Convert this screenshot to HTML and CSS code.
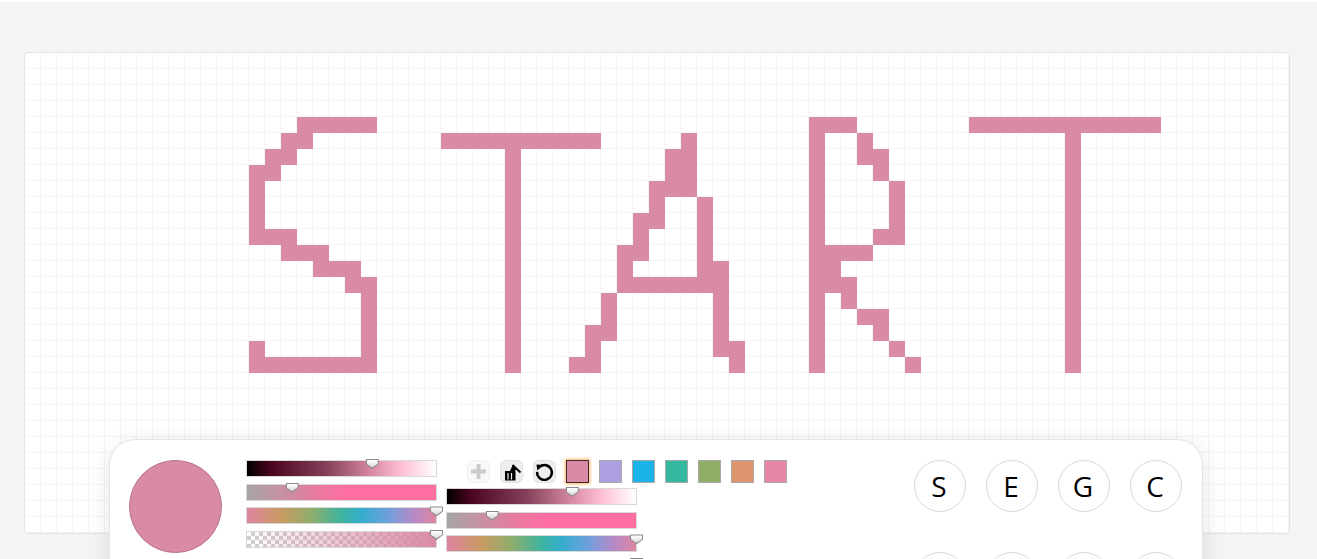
FILE: index.html
```html
<!DOCTYPE html>
<html lang="en">
<head>
  <meta charset="UTF-8" />
  <meta name="viewport" content="width=device-width, initial-scale=1.0"/>
  <title>Pixel editor</title>
  <link rel="stylesheet" href="styles.css">
</head>
<body>
  <div class="page">
    <div class="canvas" id="canvas"></div>

    <div class="panel">
      <div class="preview"></div>

      <div class="sliders">
        <div class="slider lightness"><span class="thumb" style="left: 66%"></span></div>
        <div class="slider saturation"><span class="thumb" style="left: 23.6%"></span></div>
        <div class="slider hue"><span class="thumb" style="left: 100%"></span></div>
        <div class="slider alpha"><span class="thumb" style="left: 100%"></span></div>
      </div>

      <div class="middle">
        <div class="toolbar">
          <button type="button" class="tool disabled">
            <svg viewBox="0 0 23 23" width="23" height="23"><path d="M11.5 4v15M4 11.5h15" stroke="#ccc" stroke-width="4" fill="none"/></svg>
          </button>
          <button type="button" class="tool">
            <svg viewBox="0 0 23 23" width="23" height="23">
              <path d="M5 11h10.5v9.5H5z" fill="#000"/>
              <path d="M8 13v6.5M11.5 13v6.5" stroke="#eee" stroke-width="1.2"/>
              <path d="M10 11l2.5-5.5 4 3.5-2 2.5z" fill="#000"/>
              <path d="M12.5 5l8 7.5" stroke="#000" stroke-width="2"/>
            </svg>
          </button>
          <button type="button" class="tool">
            <svg viewBox="0 0 23 23" width="23" height="23">
              <path d="M6.6 6.9a7.4 7.4 0 1 1-2.5 5" stroke="#000" stroke-width="2.4" fill="none"/>
              <path d="M3.5 4.5l7 .5-6.2 5.6z" fill="#000"/>
            </svg>
          </button>
          <button type="button" class="swatch active c1"></button>
          <button type="button" class="swatch c2"></button>
          <button type="button" class="swatch c3"></button>
          <button type="button" class="swatch c4"></button>
          <button type="button" class="swatch c5"></button>
          <button type="button" class="swatch c6"></button>
          <button type="button" class="swatch c7"></button>
        </div>
        <div class="sliders">
          <div class="slider lightness"><span class="thumb" style="left: 66%"></span></div>
          <div class="slider saturation"><span class="thumb" style="left: 23.6%"></span></div>
          <div class="slider hue"><span class="thumb" style="left: 100%"></span></div>
          <div class="slider alpha"><span class="thumb" style="left: 100%"></span></div>
        </div>
      </div>

      <div class="keys">
        <button type="button" class="key">S</button>
        <button type="button" class="key">E</button>
        <button type="button" class="key">G</button>
        <button type="button" class="key">C</button>
        <button type="button" class="key"></button>
        <button type="button" class="key"></button>
        <button type="button" class="key"></button>
        <button type="button" class="key"></button>
      </div>
    </div>
  </div>

  <script>
    const cols = 79;
    const rows = 30;

    // painted cells by row, "from-to" or a single column
    const painted = {
      4: "17-21 49-51 59-70",
      5: "16-17 26-35 41 49 52 65",
      6: "15-16 30 40-41 49 52-53 65",
      7: "14-15 30 40-41 49 53 65",
      8: "14 30 39-41 49 54 65",
      9: "14 30 39 42 49 54 65",
      10: "14 30 38-39 42 49 54 65",
      11: "14-16 30 38 42 49 53-54 65",
      12: "16-18 30 37-38 42 49-52 65",
      13: "18-20 30 37 42-43 49-50 65",
      14: "20-21 30 37-43 49-51 65",
      15: "21 30 36 43 49 51 65",
      16: "21 30 36 43 49 52-53 65",
      17: "21 30 35-36 43 49 53 65",
      18: "14 21 30 35 43-44 49 54 65",
      19: "14-21 30 34-35 44 49 55 65"
    };

    function isPainted(row, col) {
      if (!painted[row]) return false;
      return painted[row].split(" ").some(function (part) {
        const ends = part.split("-").map(Number);
        const last = ends.length > 1 ? ends[1] : ends[0];
        return col >= ends[0] && col <= last;
      });
    }

    const canvas = document.getElementById("canvas");
    for (let r = 0; r < rows; r++) {
      for (let c = 0; c < cols; c++) {
        const cell = document.createElement("div");
        cell.className = isPainted(r, c) ? "cell on" : "cell";
        canvas.appendChild(cell);
      }
    }
  </script>
</body>
</html>
```

FILE: styles.css
```css
html, body {
  margin: 0;
  height: 100%;
  overflow: hidden;
  background: #fff;
  font-family: 'Open Sans', sans-serif;
}

.page {
  position: relative;
  margin-top: 2px;
  height: 557px;
  box-sizing: border-box;
  padding: 50px 0 0 24px;
  background: #f4f4f4;
  overflow: hidden;
}

.canvas {
  display: grid;
  grid-template-columns: repeat(79, 16px);
  grid-auto-rows: 16px;
  width: 1264px;
  background: #fff;
  border: 1px solid #e4e4e4;
  border-radius: 4px;
  overflow: hidden;
}

.cell {
  box-sizing: border-box;
  border-right: 1px solid #f4f4f4;
  border-bottom: 1px solid #f4f4f4;
}

.cell.on {
  background: #d98aa5;
  border-color: #d98aa5;
}

.panel {
  position: absolute;
  left: 109px;
  top: 437px;
  width: 1094px;
  box-sizing: border-box;
  display: flex;
  align-items: flex-start;
  padding: 20px 20px 20px 19px;
  background: #fff;
  border: 1px solid #e4e4e4;
  border-radius: 26px;
  box-shadow: 0 4px 24px rgba(0,0,0,0.1);
}

.preview {
  flex: none;
  width: 93px;
  height: 93px;
  box-sizing: border-box;
  margin-right: 24px;
  background: #d98aa5;
  border: 1px solid #b97089;
  border-radius: 50%;
}

.sliders {
  flex: none;
  width: 191px;
  display: flex;
  flex-direction: column;
  gap: 6.7px;
}

.slider {
  position: relative;
  height: 17px;
  box-sizing: border-box;
  border: 1px solid #d8d8d8;
}

.lightness {
  background: linear-gradient(to right, #000 0%, #4d0522 13%, #84405a 42%, #d98aa5 66%, #ffc0d4 82%, #fff 100%);
}

.saturation {
  background: linear-gradient(to right, #a6a6a6 0%, #e57ca0 35%, #ff6ea3 52%, #ff6ea3 100%);
}

.hue {
  background: linear-gradient(to right, #df85a0 0%, #c99a62 18%, #8fae6c 34%, #3fb39f 50%, #33aecb 60%, #6ca0de 74%, #b58ac8 88%, #df85a0 100%);
}

.alpha {
  background:
    linear-gradient(to right, rgba(217,138,165,0), #d98aa5),
    repeating-conic-gradient(#cfcfcf 0% 25%, #fff 0% 50%) 0 0 / 8px 8px;
}

.thumb {
  position: absolute;
  top: -2px;
  width: 13px;
  height: 10px;
  margin-left: -6px;
  background: #8a8a8a;
  clip-path: polygon(0 0, 100% 0, 100% 50%, 50% 100%, 0 50%);
}

.thumb::after {
  content: "";
  position: absolute;
  left: 1px;
  top: 1px;
  width: 11px;
  height: 7.5px;
  background: linear-gradient(#fff, #d8d8d8);
  clip-path: polygon(0 0, 100% 0, 100% 50%, 50% 100%, 0 50%);
}

.middle {
  flex: none;
  margin-left: 9px;
}

.toolbar {
  display: flex;
  gap: 10px;
  margin-bottom: 5px;
  padding-left: 21px;
}

.tool, .swatch {
  width: 23px;
  height: 23px;
  box-sizing: border-box;
  padding: 0;
  cursor: pointer;
}

.tool {
  position: relative;
  background: #eee;
  border: none;
  border-radius: 6px;
  box-shadow: inset 0 0 0 1px #e2e2e2;
}

.tool svg {
  display: block;
}

.tool.disabled {
  background: #f8f8f8;
  box-shadow: inset 0 0 0 1px #f0f0f0;
}

.swatch {
  border: 1px solid #a8a8a8;
}

.swatch.active {
  border-color: #3a2a2a;
  box-shadow: 0 0 3px 1px #ffb066;
}

.c1 { background: #d98aa5; }
.c2 { background: #ad9fe0; }
.c3 { background: #1bb3e8; }
.c4 { background: #35b8a0; }
.c5 { background: #90ae68; }
.c6 { background: #df9470; }
.c7 { background: #e886a6; }

.keys {
  flex: none;
  margin-left: auto;
  display: grid;
  grid-template-columns: repeat(4, 52px);
  gap: 40px 20px;
}

.key {
  width: 52px;
  height: 52px;
  padding: 0 2px 0 0;
  background: #fff;
  color: #000;
  border: 1px solid #d8d8d8;
  border-radius: 50%;
  font-family: 'Open Sans', sans-serif;
  font-size: 28px;
  line-height: 1;
  cursor: pointer;
}
```
